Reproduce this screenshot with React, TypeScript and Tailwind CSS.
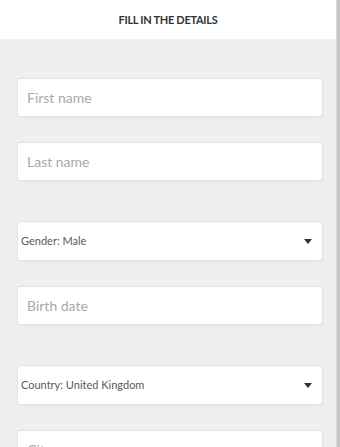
import React from "react";

function TextField({ placeholder, className = "" }: { placeholder: string; className?: string }) {
  return (
    <div className={`shrink-0 h-[39px] bg-white border border-[#e2e2e2] rounded-[3px] shadow-[0_1px_1px_rgba(0,0,0,0.04)] flex items-center pl-[9px] ${className}`}>
      <input
        readOnly
        placeholder={placeholder}
        className="w-full bg-transparent outline-none text-[14px] text-[#333] placeholder:text-[#a9a9a9] font-['Lato',sans-serif]"
      />
    </div>
  );
}

function SelectField({ label, className = "" }: { label: string; className?: string }) {
  return (
    <div className={`shrink-0 h-[40px] bg-white border border-[#e2e2e2] rounded-[3px] shadow-[0_1px_1px_rgba(0,0,0,0.04)] flex items-center pl-[3px] pr-[10px] ${className}`}>
      <span className="flex-1 text-[11px] text-[#5a5a5a] font-['Lato',sans-serif]">{label}</span>
      <span className="w-0 h-0 border-l-[4px] border-r-[4px] border-t-[5px] border-l-transparent border-r-transparent border-t-[#333]" />
    </div>
  );
}

export default function App() {
  return (
    <div className="flex w-[340px] h-[447px] overflow-hidden font-['Lato',sans-serif]">
      <div className="flex-1 bg-[#efefef] flex flex-col overflow-hidden">
        <div className="shrink-0 h-[39px] bg-white flex items-center justify-center">
          <span className="text-[11px] font-bold tracking-[-0.3px] text-[#333] pt-px">FILL IN THE DETAILS</span>
        </div>
        <div className="shrink-0 pl-[17px] pr-[13px] pt-[39px] flex flex-col">
          <TextField placeholder="First name" />
          <TextField placeholder="Last name" className="mt-[25px]" />
          <SelectField label="Gender: Male" className="mt-[40px]" />
          <TextField placeholder="Birth date" className="mt-[25px]" />
          <SelectField label="Country: United Kingdom" className="mt-[40px]" />
          <TextField placeholder="City" className="mt-[25px]" />
        </div>
      </div>
      <div className="w-[4px] bg-[#c6c6c6] border-l border-[#dcdcdc]" />
    </div>
  );
}
